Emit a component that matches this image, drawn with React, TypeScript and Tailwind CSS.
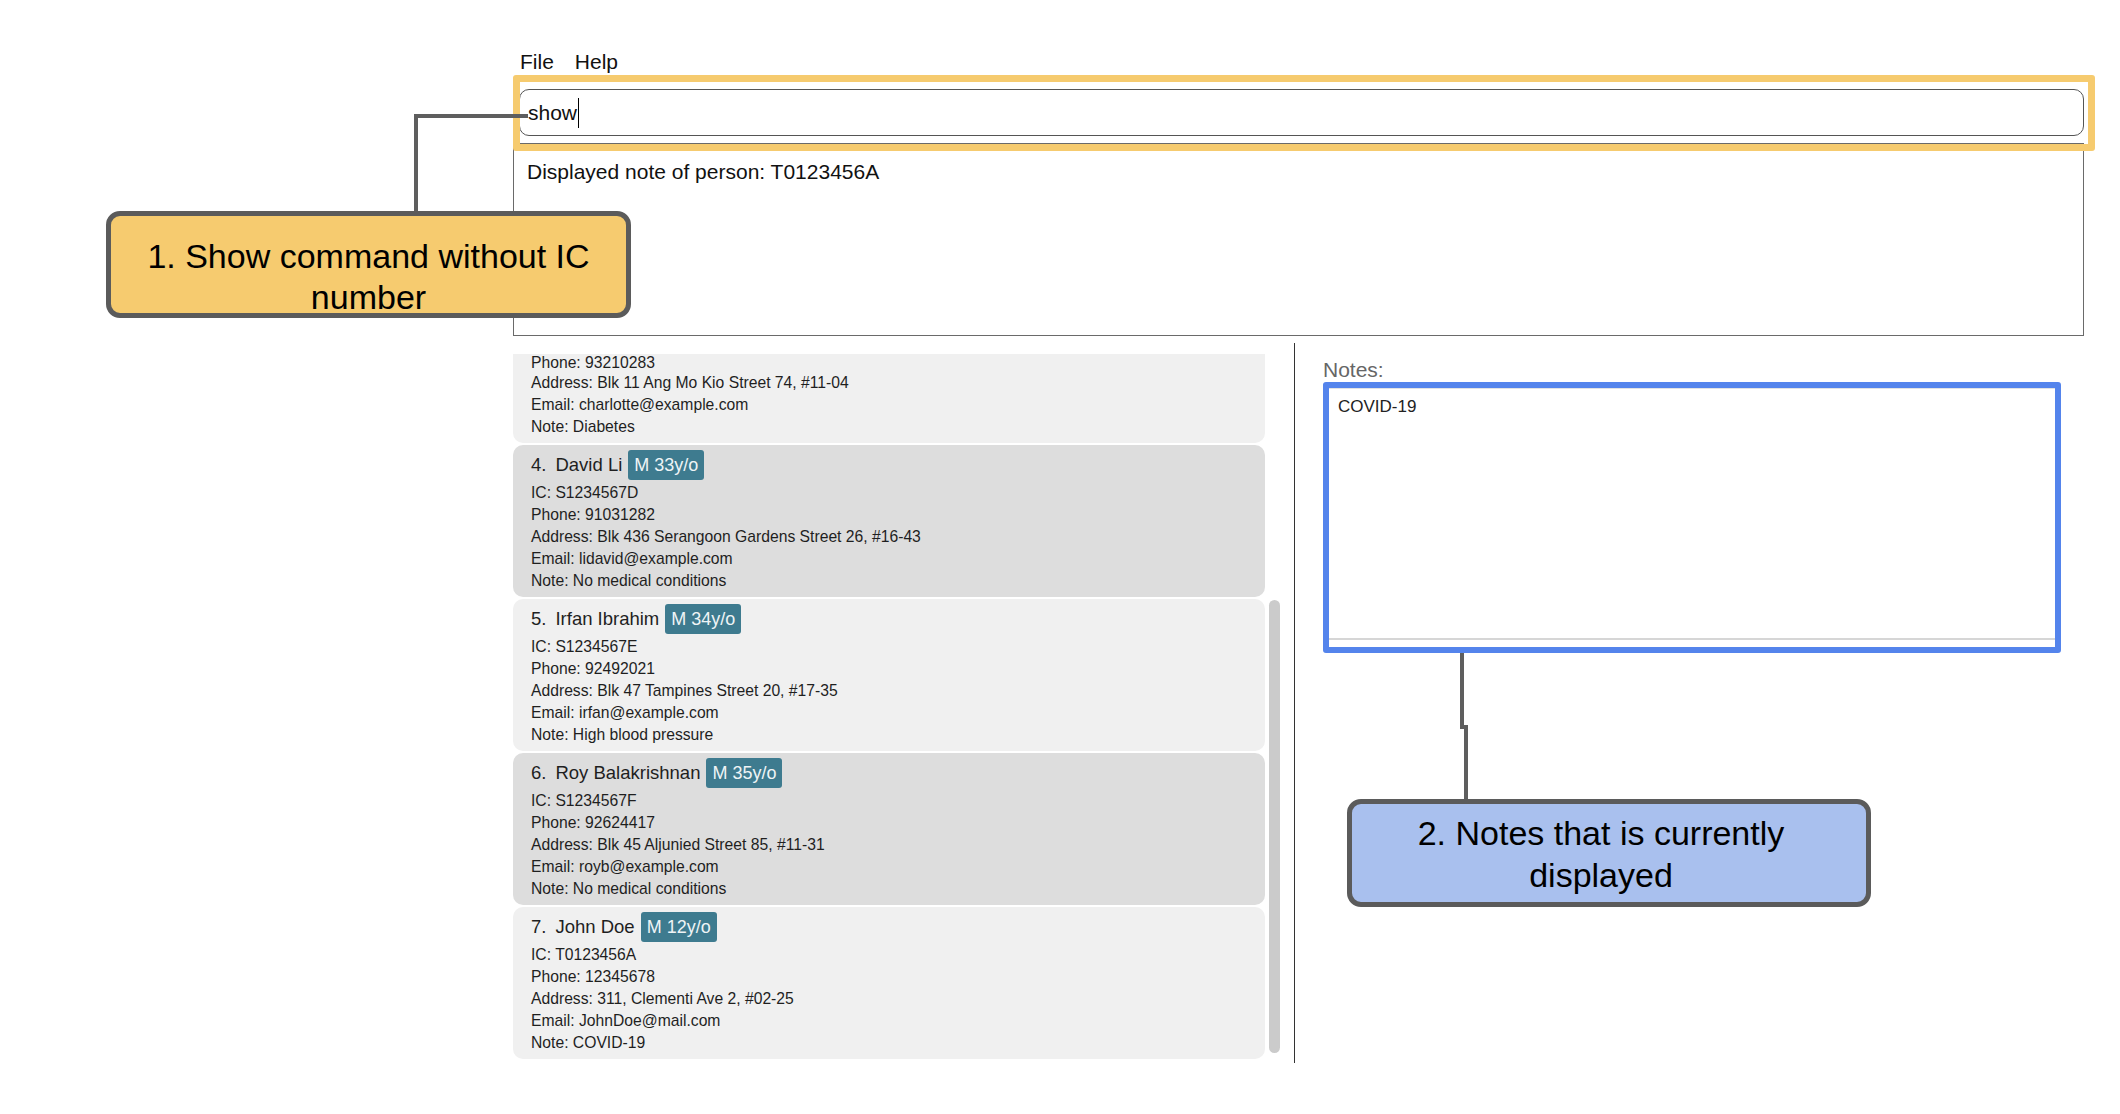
import React from "react";

type Person = {
  idx: number;
  name: string;
  tag: string;
  ic: string;
  phone: string;
  address: string;
  email: string;
  note: string;
};

const people: Person[] = [
  { idx: 3, name: "Charlotte Oliveiro", tag: "F 30y/o", ic: "S1234567C", phone: "93210283", address: "Blk 11 Ang Mo Kio Street 74, #11-04", email: "charlotte@example.com", note: "Diabetes" },
  { idx: 4, name: "David Li", tag: "M 33y/o", ic: "S1234567D", phone: "91031282", address: "Blk 436 Serangoon Gardens Street 26, #16-43", email: "lidavid@example.com", note: "No medical conditions" },
  { idx: 5, name: "Irfan Ibrahim", tag: "M 34y/o", ic: "S1234567E", phone: "92492021", address: "Blk 47 Tampines Street 20, #17-35", email: "irfan@example.com", note: "High blood pressure" },
  { idx: 6, name: "Roy Balakrishnan", tag: "M 35y/o", ic: "S1234567F", phone: "92624417", address: "Blk 45 Aljunied Street 85, #11-31", email: "royb@example.com", note: "No medical conditions" },
  { idx: 7, name: "John Doe", tag: "M 12y/o", ic: "T0123456A", phone: "12345678", address: "311, Clementi Ave 2, #02-25", email: "JohnDoe@mail.com", note: "COVID-19" },
];

// first card is scrolled half out of view, only its lower lines show
function PersonCard({ p, scrolled }: { p: Person; scrolled?: boolean }) {
  const dark = p.idx % 2 === 0;
  return (
    <div
      className={
        "h-[152px] shrink-0 rounded-[10px] px-[18px] pt-[5px] text-[#1f1f1f] " +
        (dark ? "bg-[#dddddd]" : "bg-[#f0f0f0]")
      }
    >
      {scrolled ? (
        <div className="h-[58px]" />
      ) : (
        <>
          <div className="flex h-[30px] items-center text-[18.5px]">
            <span className="mr-[9px]">{p.idx}.</span>
            <span>{p.name}</span>
            <span className="ml-[6px] flex h-[30px] items-center rounded-[3px] bg-[#3e7b8f] px-[6px] text-[18px] text-[#eef4f6]">
              {p.tag}
            </span>
          </div>
          <div className="mt-[2px] h-[22px] text-[15.7px] leading-[22px]">IC: {p.ic}</div>
        </>
      )}
      <div className="text-[15.7px] leading-[22px]">
        <div className={scrolled ? "leading-[18px]" : ""}>Phone: {p.phone}</div>
        <div>Address: {p.address}</div>
        <div>Email: {p.email}</div>
        <div>Note: {p.note}</div>
      </div>
    </div>
  );
}

export default function App() {
  return (
    <div className="relative h-[1114px] w-[2120px] overflow-hidden bg-white font-['Liberation_Sans',Arial,sans-serif] text-[#111]">
      <div className="ml-[513px] w-[1571px] pt-[48px]">
        {/* menu */}
        <div className="flex h-[28px] gap-[21px] pl-[7px] text-[21px] leading-[28px]">
          <span>File</span>
          <span>Help</span>
        </div>

        {/* command box */}
        <div className="ml-[6px] mt-[13px] flex h-[47px] items-center rounded-[10px] border-[1.5px] border-[#555] pl-[8px] text-[21px]">
          <span>show</span>
          <span className="ml-px inline-block h-[30px] w-px bg-black" />
        </div>

        {/* result display */}
        <div className="mt-[7px] h-[193px] border border-[#6a6a6a] pl-[13px] pt-[15px] text-[21px] leading-[26px]">
          Displayed note of person: T0123456A
        </div>

        {/* lower split */}
        <div className="mt-[7px] flex h-[720px]">
          <div className="flex w-[781px] pt-[11px]">
            <div className="h-full w-[752px] overflow-hidden">
              <div className="-mt-[63px] flex flex-col gap-[2px]">
                {people.map((p, i) => (
                  <PersonCard key={p.idx} p={p} scrolled={i === 0} />
                ))}
              </div>
            </div>
            <div className="ml-[4px] w-[11px]">
              <div className="mt-[246px] h-[453px] rounded-full bg-[#cbcbcb]" />
            </div>
          </div>
          <div className="h-full w-px bg-[#333]" />
          <div className="flex-1 pl-[28px] pt-[14px]">
            <div className="h-[25px] text-[21px] leading-[25px] text-[#666]">Notes:</div>
            <div className="flex h-[271px] w-[738px] flex-col rounded-[3px] border-[6px] border-[#5484ec] bg-white">
              <div className="flex-1 border-t border-[#e2e2e2] pl-[9px] pt-[8px] text-[17px] leading-[20px] text-[#222]">
                COVID-19
              </div>
              <div className="h-[9px] border-t-2 border-[#d6d6d6]" />
            </div>
          </div>
        </div>
      </div>

      {/* annotation: command box highlight */}
      <div className="absolute left-[513px] top-[75px] h-[76px] w-[1582px] rounded-[3px] border-[7px] border-[#f6cb6f]" />

      {/* connectors */}
      <svg className="absolute left-0 top-0" width="2120" height="1114" fill="none">
        <path d="M416 214 V116 H528" stroke="#5e5e5e" strokeWidth="4" />
        <path d="M1462 653 V727 H1466 V800" stroke="#5e5e5e" strokeWidth="4" />
      </svg>

      {/* callout 1 */}
      <div className="absolute left-[106px] top-[211px] h-[107px] w-[525px] rounded-[14px] border-[5px] border-[#5b5b5b] bg-[#f6cb6f] pt-[20px] text-center text-[34px] leading-[41px] text-black">
        1. Show command without IC
        <br />
        number
      </div>

      {/* callout 2 */}
      <div className="absolute left-[1347px] top-[799px] h-[108px] w-[524px] rounded-[14px] border-[5px] border-[#5b5b5b] bg-[#a9c0ee] pr-[16px] pt-[8px] text-center text-[34px] leading-[42px] text-black">
        2. Notes that is currently
        <br />
        displayed
      </div>
    </div>
  );
}
